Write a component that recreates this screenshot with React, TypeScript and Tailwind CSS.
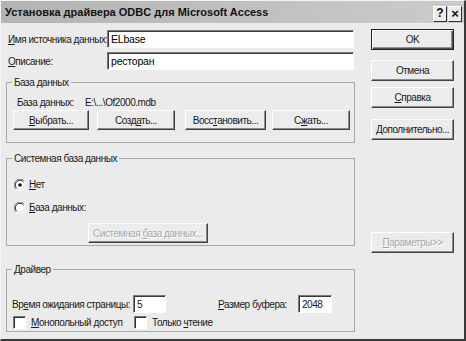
import React from "react";

const U = ({ children }: { children: React.ReactNode }) => (
  <span className="underline underline-offset-[1px] decoration-1">{children}</span>
);

function Btn({
  children,
  className = "",
  disabled = false,
  isDefault = false,
}: {
  children: React.ReactNode;
  className?: string;
  disabled?: boolean;
  isDefault?: boolean;
}) {
  return (
    <div
      className={
        "flex items-center justify-center bg-[#ececec] whitespace-nowrap " +
        (isDefault
          ? "border border-[#202020] shadow-[inset_1px_1px_#ffffff,inset_-1px_-1px_#505050,inset_-2px_-2px_#909090] "
          : "border border-t-white border-l-white border-r-[#404040] border-b-[#404040] shadow-[inset_-1px_-1px_#8a8a8a] ") +
        (disabled ? "text-[#a8a8a8] [text-shadow:1px_1px_#ffffff] " : "text-[#1a1a1a] ") +
        className
      }
    >
      {children}
    </div>
  );
}

function Input({ value, className = "" }: { value: string; className?: string }) {
  return (
    <div
      className={
        "bg-white border border-t-[#7a7a7a] border-l-[#7a7a7a] border-b-white border-r-white shadow-[inset_1px_1px_#3a3a3a] pl-[3px] flex items-center text-[#1a1a1a] whitespace-nowrap " +
        className
      }
    >
      {value}
    </div>
  );
}

function Radio({ checked }: { checked?: boolean }) {
  return (
    <svg width="12" height="12" viewBox="0 0 12 12" className="shrink-0">
      <path d="M10.2 1.8 A5.5 5.5 0 0 0 1.8 10.2" stroke="#808080" strokeWidth="1" fill="none" />
      <path d="M9.3 2.7 A4.3 4.3 0 0 0 2.7 9.3" stroke="#303030" strokeWidth="1" fill="none" />
      <path d="M1.8 10.2 A5.5 5.5 0 0 0 10.2 1.8" stroke="#ffffff" strokeWidth="1" fill="none" />
      <circle cx="6" cy="6" r="3.8" fill="#ffffff" />
      {checked && <circle cx="6" cy="6" r="1.8" fill="#111111" />}
    </svg>
  );
}

function Check() {
  return (
    <div className="w-[13px] h-[13px] bg-white border border-t-[#7a7a7a] border-l-[#7a7a7a] border-b-white border-r-white shadow-[inset_1px_1px_#303030] shrink-0" />
  );
}

function Group({
  title,
  className = "",
  children,
}: {
  title: string;
  className?: string;
  children: React.ReactNode;
}) {
  return (
    <fieldset
      className={
        "border border-[#a9a9a9] box-border px-0 pb-0 mx-0 min-w-0 " + className
      }
    >
      <legend className="ml-[5px] px-[2px] leading-[13px] text-[#1a1a1a] whitespace-nowrap">{title}</legend>
      {children}
    </fieldset>
  );
}

export default function App() {
  return (
    <div
      className="w-[466px] h-[341px] bg-[#ebebeb] box-border border-r-2 border-b-2 border-r-[#3a3a3a] border-b-[#3a3a3a] border-l border-t border-l-[#f4f4f4] border-t-[#f4f4f4] overflow-hidden text-[10px] tracking-[-0.45px] leading-[13px] text-[#1a1a1a] whitespace-nowrap"
      style={{ fontFamily: '"Liberation Sans", Arial, sans-serif' }}
    >
      {/* Title bar */}
      <div className="h-[22px] flex items-center bg-gradient-to-r from-[#b3b3b3] to-[#cbcbcb] pl-[4px] pr-[2px]">
        <div className="font-bold text-[11px] tracking-normal text-[#121212] flex-1">
          Установка драйвера ODBC для Microsoft Access
        </div>
        <div className="flex gap-[1px] mt-[3px]">
          <div className="w-[14px] h-[16px] flex items-center justify-center bg-[#ececec] border border-t-white border-l-white border-r-[#303030] border-b-[#303030] font-bold text-[12px] tracking-normal text-[#111]">
            ?
          </div>
          <div className="w-[14px] h-[16px] flex items-center justify-center bg-[#ececec] border border-t-white border-l-white border-r-[#303030] border-b-[#303030] font-bold text-[13px] tracking-normal text-[#111]">
            ×
          </div>
        </div>
      </div>

      {/* Body */}
      <div className="flex pl-[5px]">
        {/* Left column */}
        <div className="w-[349px] flex flex-col">
          <div className="mt-[7px] flex items-center h-[18px]">
            <div className="w-[101px] pl-[2px]">
              <U>И</U>мя источника данных:
            </div>
            <Input value="ELbase" className="w-[247px] h-[18px] text-[10.5px] tracking-[-0.2px] text-black" />
          </div>
          <div className="mt-[4px] flex items-center h-[18px]">
            <div className="w-[101px] pl-[2px]">
              <U>О</U>писание:
            </div>
            <Input value="ресторан" className="w-[247px] h-[18px] text-[10.5px] tracking-[-0.2px] text-black" />
          </div>

          <Group title="База данных" className="mt-[6px] h-[67px]">
            <div className="flex items-center h-[13px] mt-[7px] pl-[10px]">
              <div className="w-[68px]">База данных:</div>
              <div>E:\...\Of2000.mdb</div>
            </div>
            <div className="flex mt-[1px] pl-[6px] h-[20px]">
              <Btn className="w-[76px] h-[20px]">
                <span>
                  <U>В</U>ыбрать...
                </span>
              </Btn>
              <Btn className="w-[78px] h-[20px] ml-[8px]">
                <span>
                  Созд<U>а</U>ть...
                </span>
              </Btn>
              <Btn className="w-[81px] h-[20px] ml-[10px]">
                <span>
                  Восс<U>т</U>ановить...
                </span>
              </Btn>
              <Btn className="w-[78px] h-[20px] ml-[6px]">
                <span>
                  С<U>ж</U>ать...
                </span>
              </Btn>
            </div>
          </Group>

          <Group title="Системная база данных" className="mt-[9px] h-[94px]">
            <div className="flex items-center h-[13px] mt-[13px] pl-[7px] gap-[3px]">
              <Radio checked />
              <span>
                <U>Н</U>ет
              </span>
            </div>
            <div className="flex items-center h-[13px] mt-[10px] pl-[7px] gap-[3px]">
              <Radio />
              <span>
                <U>Б</U>аза данных:
              </span>
            </div>
            <div className="mt-[9px] pl-[81px]">
              <Btn disabled className="w-[120px] h-[20px]">
                <span>
                  Системная <U>б</U>аза данных...
                </span>
              </Btn>
            </div>
          </Group>

          <Group title="Драйвер" className="mt-[17px] h-[69px]">
            <div className="flex items-center h-[18px] mt-[19px] pl-[5px]">
              <div className="w-[121px]">
                Вр<U>е</U>мя ожидания страницы:
              </div>
              <Input value="5" className="w-[33px] h-[18px]" />
              <div className="ml-[52px] w-[80px]">
                <U>Р</U>азмер буфера:
              </div>
              <Input value="2048" className="w-[34px] h-[18px]" />
            </div>
            <div className="flex items-center h-[13px] mt-[3px] pl-[6px]">
              <Check />
              <span className="ml-[5px] w-[103px]">
                <U>М</U>онопольный доступ
              </span>
              <Check />
              <span className="ml-[5px]">
                Только <U>ч</U>тение
              </span>
            </div>
          </Group>
        </div>

        {/* Right column */}
        <div className="ml-[16px] w-[83px] flex flex-col">
          <Btn isDefault className="mt-[6px] h-[21px]">
            OK
          </Btn>
          <Btn className="mt-[10px] h-[21px]">Отмена</Btn>
          <Btn className="mt-[6px] h-[21px]">
            <span>
              <U>С</U>правка
            </span>
          </Btn>
          <Btn className="mt-[11px] h-[21px]">
            <span>
              <U>Д</U>ополнительно...
            </span>
          </Btn>
          <Btn disabled className="mt-[92px] h-[21px]">
            <span>
              <U>П</U>араметры&gt;&gt;
            </span>
          </Btn>
        </div>
      </div>
    </div>
  );
}
